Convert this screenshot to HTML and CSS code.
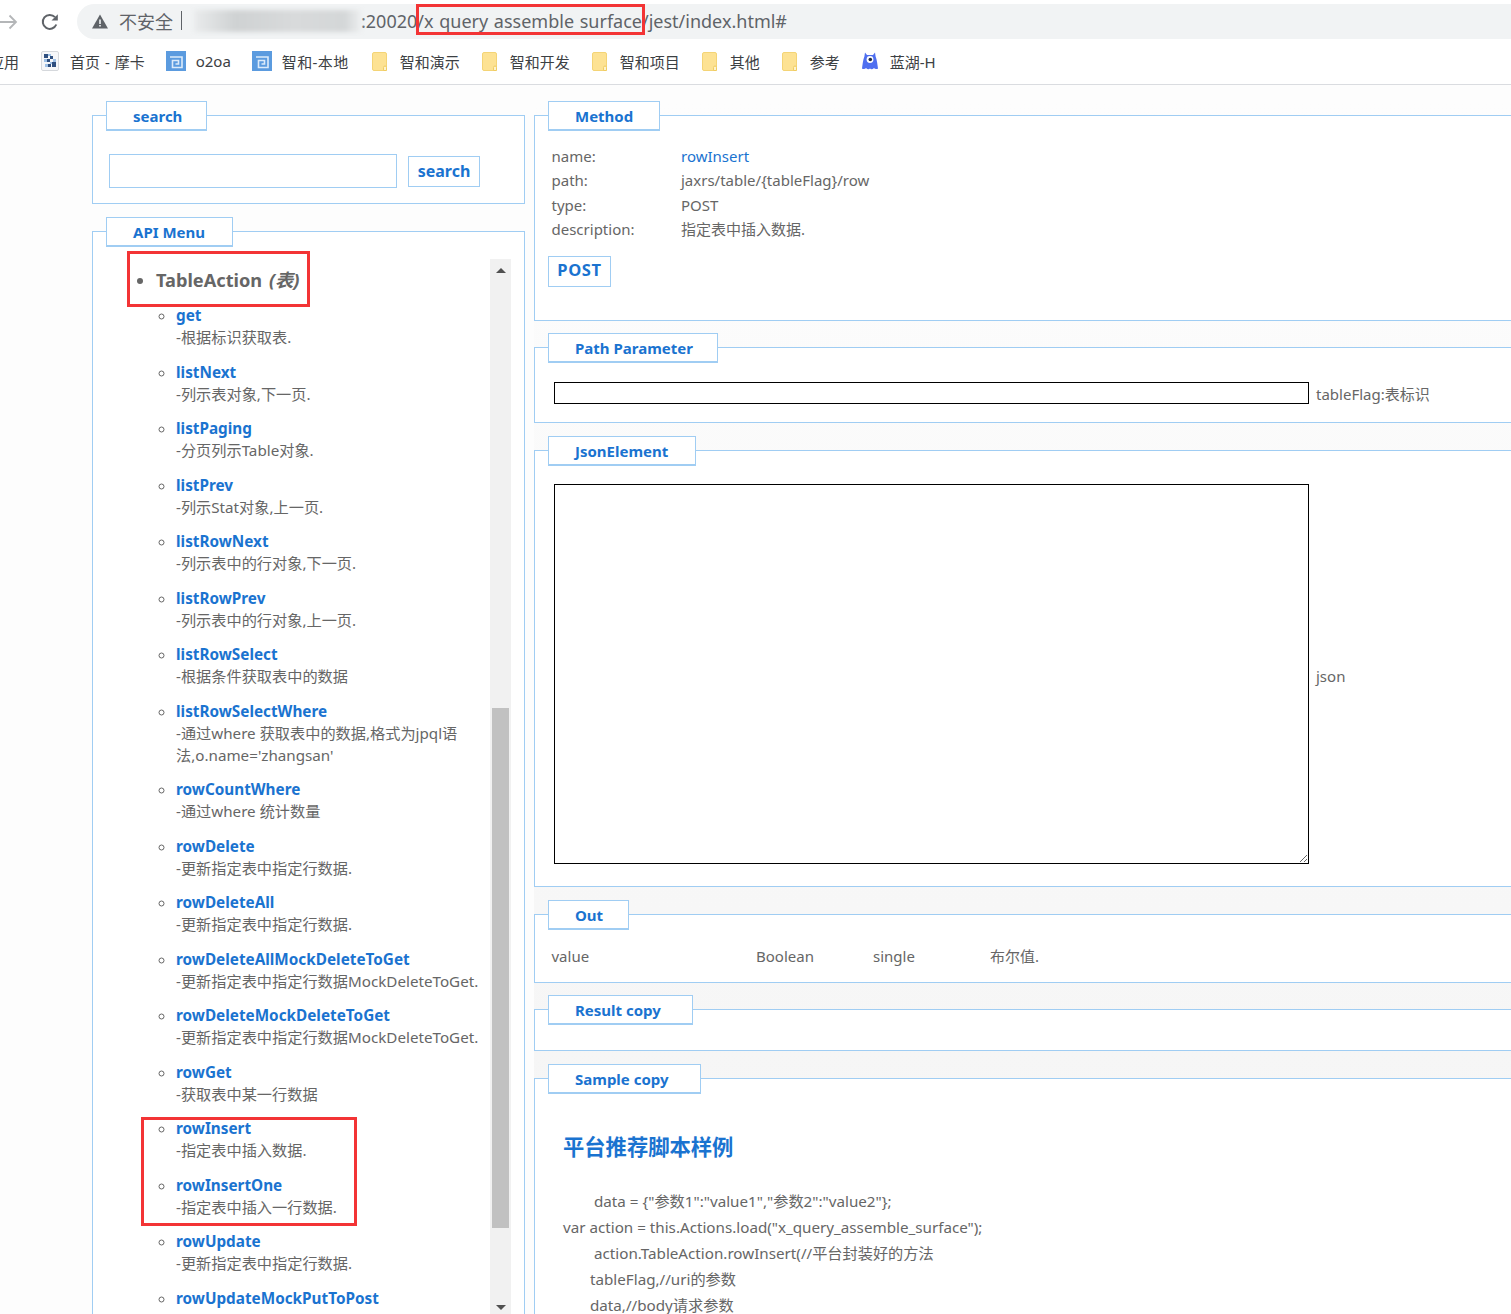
FILE: index.html
```html
<!DOCTYPE html>
<html lang="zh-CN">
<head>
<meta charset="utf-8">
<title>x_query_assemble_surface</title>
<link rel="stylesheet" href="styles.css">
</head>
<body>
<header class="browser">
  <div class="toolbar">
    <svg class="nav-back" width="18" height="18" viewBox="0 0 18 18"><path d="M0 9h16M9.500 2.500 16 9l-6.500 6.500" fill="none" stroke="#b4b6b8" stroke-width="1.800"/></svg>
    <svg class="nav-reload" width="20" height="20" viewBox="0 0 20 20"><path d="M16.300 12.500A7 7 0 1 1 15 5.200" fill="none" stroke="#5f6368" stroke-width="2"/><path d="M17.800 2.200v6.300h-6.300z" fill="#5f6368"/></svg>
    <div class="omnibox">
      <svg class="warn" width="16" height="15" viewBox="0 0 16 15"><path d="M8 0.500 16 14.500H0z" fill="#5f6368"/><path d="M7.200 5.500h1.600v4.500H7.200zM7.200 11h1.600v1.600H7.200z" fill="#f1f3f4"/></svg>
      <span class="insecure">不安全</span><span class="pipe"></span>
      <span class="blurred"></span>
      <span class="url">:20020/x query assemble surface/jest/index.html#</span>
    </div>
  </div>
  <nav class="bookmarks">
    <span class="bm-apps">应用</span>
    <span class="bm bm-home"><svg class="ic" width="18" height="20" viewBox="0 0 18 20"><rect x="0.500" y="0.500" width="17" height="19" rx="1.500" fill="#f6f7f9" stroke="#d5d8dc"/><path d="M3 3h4v4H3zM9 5h3v3H9zM6 8h3v3H6zM11 11h4v5h-4zM7 13h3v3H7z" fill="#2f4f7f"/><path d="M7 3h3v2H7zM3 8h3v3H3zM12 8h3v3h-3zM9 11h2v2H9zM4 13h3v3H4z" fill="#9fc1e6"/></svg>首页 - 摩卡</span>
    <span class="bm"><svg class="ic ic-o2" width="20" height="20" viewBox="0 0 20 20"><rect width="20" height="20" fill="#5b9bdf"/><path d="M4 6h12v10.500H6.500V9.500h6v3.500H9.500" fill="none" stroke="#dcebfa" stroke-width="1.600"/></svg>o2oa</span>
    <span class="bm bm-local"><svg class="ic ic-o2" width="20" height="20" viewBox="0 0 20 20"><rect width="20" height="20" fill="#5b9bdf"/><path d="M4 6h12v10.500H6.500V9.500h6v3.500H9.500" fill="none" stroke="#dcebfa" stroke-width="1.600"/></svg>智和-本地</span>
    <span class="bm"><svg class="folder" width="15" height="19" viewBox="0 0 15 19"><use href="#fold"/></svg>智和演示</span>
    <span class="bm"><svg class="folder" width="15" height="19" viewBox="0 0 15 19"><use href="#fold"/></svg>智和开发</span>
    <span class="bm"><svg class="folder" width="15" height="19" viewBox="0 0 15 19"><use href="#fold"/></svg>智和项目</span>
    <span class="bm"><svg class="folder" width="15" height="19" viewBox="0 0 15 19"><use href="#fold"/></svg>其他</span>
    <span class="bm"><svg class="folder" width="15" height="19" viewBox="0 0 15 19"><use href="#fold"/></svg>参考</span>
    <span class="bm"><svg class="ic lanhu" width="16" height="18" viewBox="0 0 16 18"><path d="M3 0.500 5 3h6l2-2.500.6 4C15 8 15.500 13 16 16.500c-1.500 1.200-3 .2-4-.6-1.300 1.300-2.700 1.800-4 .6-1.300 1.200-2.700.7-4-.6-1 .8-2.500 1.800-4 .6C.500 13 1 8 2.400 4.500z" fill="#4f6ff0"/><circle cx="8" cy="7.500" r="3.400" fill="#fff"/><circle cx="8.300" cy="7.500" r="1.800" fill="#1f2a44"/></svg>蓝湖-H</span>
    <svg class="defs" width="0" height="0"><defs><g id="fold"><path d="M2 0.500h11a1.500 1.500 0 0 1 1.500 1.500v15a1.500 1.500 0 0 1-1.500 1.500H2A1.500 1.500 0 0 1 .5 17V2A1.500 1.500 0 0 1 2 .5z" fill="#fde293" stroke="#f4d476"/><path d="M11.500 18.500v-3a1.500 1.500 0 0 1 3 0v3z" fill="#fff3c9" stroke="#f0cc62"/></g></defs></svg>
  </nav>
</header>

<main class="page">
  <div class="col-left">
    <fieldset class="panel panel-search">
      <legend class="tag">search</legend>
      <div class="search-row">
        <input class="search-input" type="text" aria-label="search">
        <button class="btn btn-search">search</button>
      </div>
    </fieldset>
    <fieldset class="panel panel-menu">
      <legend class="tag">API Menu</legend>
      <div class="menu-wrap">
        <div class="menu-list">
          <ul class="menu-root">
            <li><strong class="root-name">TableAction <em>(表)</em></strong>
              <ul class="menu-sub">
                <li><a>get</a><p>-根据标识获取表.</p></li>
                <li><a>listNext</a><p>-列示表对象,下一页.</p></li>
                <li><a>listPaging</a><p>-分页列示Table对象.</p></li>
                <li><a>listPrev</a><p>-列示Stat对象,上一页.</p></li>
                <li><a>listRowNext</a><p>-列示表中的行对象,下一页.</p></li>
                <li><a>listRowPrev</a><p>-列示表中的行对象,上一页.</p></li>
                <li><a>listRowSelect</a><p>-根据条件获取表中的数据</p></li>
                <li><a>listRowSelectWhere</a><p>-通过where 获取表中的数据,格式为jpql语法,o.name='zhangsan'</p></li>
                <li><a>rowCountWhere</a><p>-通过where 统计数量</p></li>
                <li><a>rowDelete</a><p>-更新指定表中指定行数据.</p></li>
                <li><a>rowDeleteAll</a><p>-更新指定表中指定行数据.</p></li>
                <li><a>rowDeleteAllMockDeleteToGet</a><p>-更新指定表中指定行数据MockDeleteToGet.</p></li>
                <li><a>rowDeleteMockDeleteToGet</a><p>-更新指定表中指定行数据MockDeleteToGet.</p></li>
                <li><a>rowGet</a><p>-获取表中某一行数据</p></li>
                <li><a>rowInsert</a><p>-指定表中插入数据.</p></li>
                <li><a>rowInsertOne</a><p>-指定表中插入一行数据.</p></li>
                <li><a>rowUpdate</a><p>-更新指定表中指定行数据.</p></li>
                <li><a>rowUpdateMockPutToPost</a></li>
              </ul>
            </li>
          </ul>
        </div>
        <div class="scrollbar">
          <span class="arrow-up"></span>
          <div class="track"><div class="thumb"></div></div>
          <span class="arrow-down"></span>
        </div>
      </div>
    </fieldset>
  </div>

  <div class="col-right">
    <fieldset class="panel panel-method">
      <legend class="tag">Method</legend>
      <dl class="meta">
        <dt>name:</dt><dd class="link">rowInsert</dd>
        <dt>path:</dt><dd>jaxrs/table/{tableFlag}/row</dd>
        <dt>type:</dt><dd>POST</dd>
        <dt>description:</dt><dd>指定表中插入数据.</dd>
      </dl>
      <button class="btn btn-post">POST</button>
    </fieldset>
    <fieldset class="panel panel-path">
      <legend class="tag">Path Parameter</legend>
      <div class="field-row">
        <input class="field-input" type="text" aria-label="tableFlag">
        <span>tableFlag:表标识</span>
      </div>
    </fieldset>
    <fieldset class="panel panel-json">
      <legend class="tag">JsonElement</legend>
      <div class="field-row">
        <textarea class="field-area" aria-label="json"></textarea>
        <span>json</span>
      </div>
    </fieldset>
    <fieldset class="panel panel-out">
      <legend class="tag">Out</legend>
      <div class="out-row"><span>value</span><span>Boolean</span><span>single</span><span>布尔值.</span></div>
    </fieldset>
    <fieldset class="panel panel-result">
      <legend class="tag">Result copy</legend>
    </fieldset>
    <fieldset class="panel panel-sample">
      <legend class="tag">Sample copy</legend>
      <h2 class="sample-title">平台推荐脚本样例</h2>
      <div class="code">
        <p class="in1">data = {"参数1":"value1","参数2":"value2"};</p>
        <p>var action = this.Actions.load("x_query_assemble_surface");</p>
        <p class="in1">action.TableAction.rowInsert(//平台封装好的方法</p>
        <p class="in2">tableFlag,//uri的参数</p>
        <p class="in2">data,//body请求参数</p>
      </div>
    </fieldset>
  </div>
</main>

<div class="mark mark-url"></div>
<div class="mark mark-action"></div>
<div class="mark mark-insert"></div>
</body>
</html>
```

FILE: styles.css
```css
* { box-sizing: border-box; }
html, body { margin: 0; height: 1314px; overflow: hidden; }
body {
  position: relative;
  width: 1511px;
  font-family: "Noto Sans", "Noto Sans CJK SC", sans-serif;
  font-size: 15px;
  color: #666;
  background: #fff;
}

/* browser chrome */
.browser { height: 85px; border-bottom: 1px solid #dadce0; background: #fff; }
.toolbar { height: 42px; display: flex; align-items: center; padding-top: 1px; }
.nav-back { flex: none; }
.nav-reload { margin-left: 22px; flex: none; }
.omnibox {
  margin-left: 17px;
  flex: 1;
  min-width: 0;
  height: 35px;
  margin-right: -30px;
  background: #f1f3f4;
  border-radius: 18px;
  display: flex;
  align-items: center;
  padding: 0 0 2px 15px;
  font-size: 18px;
  color: #5f6368;
  white-space: nowrap;
}
.warn { flex: none; margin-top: 2px; }
.insecure { margin-left: 11px; }
.pipe { width: 1px; height: 19px; background: #5f6368; margin-left: 8px; }
.blurred {
  width: 167px;
  height: 22px;
  margin-left: 12px;
  background: linear-gradient(90deg, #e9ebec, #cfd2d3 25%, #d8dadb 60%, #d4d7d8 90%, #eceeef);
  filter: blur(2px);
}
.url { word-spacing: 1px; }
.bookmarks {
  height: 42px;
  display: flex;
  align-items: center;
  padding-bottom: 4px;
  font-size: 15px;
  color: #3c4043;
  white-space: nowrap;
}
.bm-apps { margin-left: -11px; margin-right: 22px; }
.bm { display: flex; align-items: center; margin-right: 21px; }
.bm-home { word-spacing: 1px; }
.bm-local { letter-spacing: 0.4px; margin-right: 22px; }
.ic { margin-right: 11px; flex: none; }
.ic-o2 { margin-right: 10px; }
.folder { margin-right: 13px; flex: none; margin-left: 1px; }
.lanhu { margin-left: 1px; margin-right: 12px; }
.defs { position: absolute; }

/* page */
.page {
  height: 1229px;
  display: flex;
  gap: 9px;
  padding: 16px 0 0 92px;
  overflow: hidden;
  background: #fdfdfd;
}
.col-left { width: 433px; flex: none; display: flex; flex-direction: column; }
.col-right {
  width: 1100px;
  flex: none;
  display: flex;
  flex-direction: column;
  background: linear-gradient(#fdfdfd, #f4f4f4);
}

.panel {
  flex: none;
  margin: 0 0 13px;
  padding: 0;
  min-width: 0;
  border: 1px solid #a0cdf3;
  background: #fff;
}
.tag {
  margin-left: 13px;
  height: 29px;
  padding: 0 0 0 26px;
  border: 1px solid #a0cdf3;
  box-shadow: 0 1px 0 #a0cdf3;
  background: #fff;
  color: #1a73d0;
  font-weight: 700;
  font-size: 15px;
  line-height: 28px;
}
.panel-search .tag { width: 101px; }
.panel-menu .tag { width: 127px; }
.panel-method .tag { width: 112px; }
.panel-path .tag { width: 170px; }
.panel-json .tag { width: 148px; }
.panel-out .tag { width: 81px; }
.panel-result .tag { width: 145px; }
.panel-sample .tag { width: 153px; }
.btn {
  border: 1px solid #a0cdf3;
  background: #fff;
  color: #1a73d0;
  font-family: inherit;
  font-weight: 700;
  padding: 0;
}

/* search */
.panel-search { height: 103px; }
.search-row { display: flex; align-items: center; padding: 24px 0 0 16px; gap: 11px; }
.search-input { width: 288px; height: 34px; border: 1px solid #a0cdf3; background: #fff; }
.btn-search { width: 72px; height: 31px; font-size: 16px; }

/* menu */
.panel-menu { height: 1200px; margin-bottom: 0; }
.menu-wrap { display: flex; padding-top: 13px; height: 1100px; }
.menu-list { width: 397px; flex: none; }
.menu-root { margin: 0; padding: 0 0 0 63px; list-style: disc; color: #666; font-size: 18px; }
.root-name { display: block; font-size: 18.200px; line-height: 42px; height: 45px; }
.root-name em { font-style: italic; margin-left: 2px; }
.menu-sub { margin: 0; padding: 0 0 0 20px; list-style: circle; font-size: 15px; }
.menu-sub li { margin-bottom: 12.500px; line-height: 22px; }
.menu-sub a { color: #1a73d0; font-weight: 700; font-size: 15.300px; display: block; }
.menu-sub p { margin: 0; font-size: 15.200px; }
.scrollbar { width: 21px; height: 1100px; flex: none; background: #f1f1f1; display: flex; flex-direction: column; align-items: center; }
.arrow-up { margin-top: 9px; border: 5px solid transparent; border-top: 0; border-bottom: 5px solid #505050; }
.track { flex: none; width: 17px; height: 1032px; padding-top: 435px; }
.thumb { height: 520px; background: #c1c1c1; }
.arrow-down { border: 5px solid transparent; border-bottom: 0; border-top: 5px solid #505050; }

/* method */
.panel-method { height: 220px; margin-bottom: 12px; }
.meta { margin: 0; padding: 14px 0 0 16.500px; display: grid; grid-template-columns: 129.500px 1fr; grid-auto-rows: 24.300px; line-height: 24.300px; }
.meta dt, .meta dd { margin: 0; }
.link { color: #1a73d0; }
.btn-post { display: block; margin: 15px 0 0 13px; width: 63px; height: 31px; font-size: 16.500px; letter-spacing: 0.6px; padding-bottom: 5px; }

/* fields */
.panel-path { height: 90px; }
.panel-path .field-row { padding-top: 20px; }
.panel-json { height: 451px; }
.panel-json .field-row span { padding-top: 3px; }
.field-row { display: flex; align-items: center; gap: 7px; padding: 19px 0 0 19px; }
.field-input { width: 755px; height: 22px; border: 1px solid #000; background: #fff; }
.field-area { width: 755px; height: 380px; border: 1px solid #000; background: #fff; margin: 0; padding: 0; display: block; }

/* out */
.panel-out { height: 83px; margin-bottom: 12px; }
.out-row { display: grid; grid-template-columns: 204.500px 117px 117px 1fr; padding: 15px 0 0 16.500px; line-height: 24px; }
.panel-result { height: 56px; }

/* sample */
.panel-sample { height: 400px; margin-bottom: 0; }
.sample-title { margin: 38px 0 25px 28px; color: #1a73d0; font-size: 21.300px; line-height: 32px; font-weight: 700; }
.code { padding-left: 28px; font-size: 15.200px; }
.code p { margin: 0; line-height: 26px; white-space: nowrap; }
.in1 { padding-left: 31px; }
.in2 { padding-left: 27px; }

/* red annotation frames drawn over the screenshot */
.mark { position: absolute; border: 3px solid #f33435; }
.mark-url { left: 416px; top: 4px; width: 229px; height: 31px; }
.mark-action { left: 127px; top: 251px; width: 183px; height: 56px; }
.mark-insert { left: 141px; top: 1117px; width: 216px; height: 109px; }
```
